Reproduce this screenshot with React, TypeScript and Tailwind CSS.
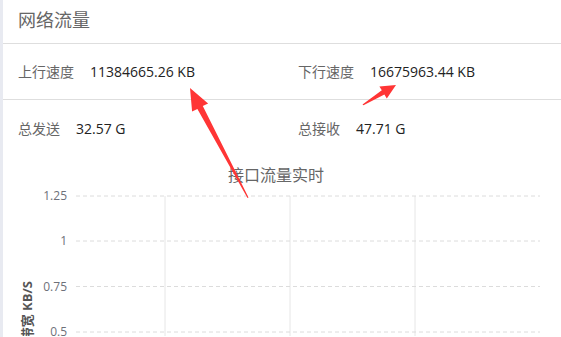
const font = { fontFamily: '"Open Sans", "Noto Sans CJK SC", sans-serif' };

const stats = [
  [
    { label: '上行速度', value: '11384665.26 KB' },
    { label: '下行速度', value: '16675963.44 KB' },
  ],
  [
    { label: '总发送', value: '32.57 G' },
    { label: '总接收', value: '47.71 G' },
  ],
];

const yTicks = [
  { label: '1.25', y: 197 },
  { label: '1', y: 242 },
  { label: '0.75', y: 287.5 },
  { label: '0.5', y: 333 },
];

function TrafficChart() {
  return (
    <svg width="558" height="180" viewBox="3 157 558 180" className="block">
      <text x="276" y="182" textAnchor="middle" fontSize="16" fill="#666">
        接口流量实时
      </text>
      {[165, 290, 415].map((x) => (
        <line key={x} x1={x} y1="197" x2={x} y2="340" stroke="#e6e6e6" strokeWidth="1" />
      ))}
      {yTicks.map((t) => (
        <g key={t.label}>
          <line x1="76" y1={t.y} x2="540" y2={t.y} stroke="#dcdcdc" strokeWidth="1" strokeDasharray="4 3" />
          <text x="67" y={t.y + 4} textAnchor="end" fontSize="12" fill="#6e7079">
            {t.label}
          </text>
        </g>
      ))}
      <text
        transform="translate(32,282) rotate(-90)"
        textAnchor="end"
        fontSize="13"
        fontWeight="bold"
        fill="#555"
      >
        带宽 KB/S
      </text>
    </svg>
  );
}

function Arrows() {
  return (
    <svg className="absolute left-0 top-0 pointer-events-none" width="561" height="337">
      <polygon
        points="247.5,198 197.4,108.9 192.1,111.6 190,88 208.1,103.4 202.8,106.1 248.5,197.5"
        fill="#ff3535"
      />
      <polygon
        points="362.5,104.5 381.8,90.3 379.4,86.5 396,85 386.8,98.4 384.4,94.5 363.5,105.3"
        fill="#ff3535"
      />
    </svg>
  );
}

export default function App() {
  return (
    <div className="relative flex w-[561px] h-[337px] overflow-hidden bg-white" style={font}>
      <div className="w-[3px] shrink-0 bg-[#e8eaf1]" />
      <div className="flex-1 flex flex-col">
        <div className="h-[44px] shrink-0 flex items-center pl-[15px] pb-[3px] border-b border-[#dedede]">
          <span className="text-[18px] text-[#666]">网络流量</span>
        </div>
        {stats.map((row, i) => (
          <div
            key={i}
            className={`h-[56px] shrink-0 flex items-center pl-[15px] ${i === 0 ? 'border-b border-[#dedede]' : ''}`}
          >
            {row.map((s, j) => (
              <div key={s.label} className={`flex items-center gap-4 ${j === 0 ? 'w-[280px]' : ''}`}>
                <span className="text-[14px] text-[#666]">{s.label}</span>
                <span className="text-[14px] text-[#222]">{s.value}</span>
              </div>
            ))}
          </div>
        ))}
        <TrafficChart />
      </div>
      <Arrows />
    </div>
  );
}
